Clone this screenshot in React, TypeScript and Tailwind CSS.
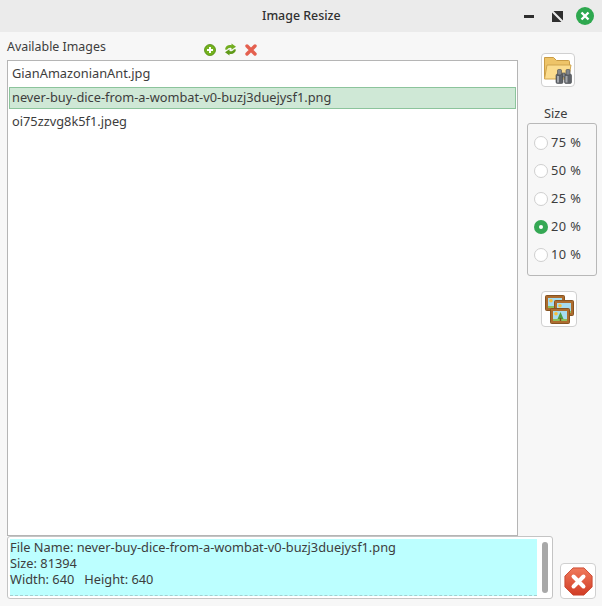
import React from "react";

const Btn = ({ children, className = "" }: { children: React.ReactNode; className?: string }) => (
  <div className={"flex shrink-0 items-center justify-center rounded-[4px] border border-[#d0d0d0] bg-white " + className}>{children}</div>
);

const FolderIcon = () => (
  <svg width="28" height="28" viewBox="0 0 28 28">
    <path d="M0.500 1.500h9l3 3h12a1 1 0 0 1 1 1v17H1.500a1 1 0 0 1-1-1z" fill="#eec468" stroke="#c99c45" />
    <path d="M3 9h24l-2.500 14H0.500z" fill="#fbdc8e" stroke="#d0a54e" />
    <g fill="#5f6369" stroke="#44474c" strokeWidth="0.6">
      <rect x="12" y="18" width="7" height="9.500" rx="1.500" />
      <rect x="20.500" y="18" width="7" height="9.500" rx="1.500" />
      <rect x="13.500" y="13.500" width="4" height="5.500" rx="1" fill="#83878c" />
      <rect x="22" y="13.500" width="4" height="5.500" rx="1" fill="#83878c" />
      <rect x="18.500" y="17" width="2.500" height="4" fill="#83878c" />
    </g>
    <rect x="13" y="20" width="2" height="6.500" fill="#a5a8ac" />
    <rect x="21.500" y="20" width="2" height="6.500" fill="#a5a8ac" />
  </svg>
);

const Frame = ({ x, y, tree }: { x: number; y: number; tree?: boolean }) => (
  <g transform={`translate(${x} ${y})`}>
    <rect x="0.500" y="0.500" width="19" height="15" rx="1" fill="#ad6c2e" stroke="#855322" />
    <rect x="3" y="3" width="14" height="10" fill="#a6dcf0" />
    <circle cx="6" cy="5.800" r="1.800" fill="#f6c13d" />
    <rect x="3" y="11" width="14" height="2" fill="#8cbf5a" />
    {tree && (
      <>
        <path d="M10.500 4l3 7h-6z" fill="#4f9a3f" />
        <rect x="9.800" y="10" width="1.400" height="3" fill="#7a4a1c" />
      </>
    )}
  </g>
);

const ImagesIcon = () => (
  <svg width="29" height="29" viewBox="0 0 29 29">
    <Frame x={0} y={0} />
    <Frame x={9} y={5} />
    <Frame x={5} y={13} tree />
  </svg>
);

const StopIcon = () => (
  <svg width="29" height="29" viewBox="0 0 32 32">
    <defs>
      <linearGradient id="st" x1="0" y1="0" x2="0" y2="1">
        <stop offset="0" stopColor="#f07a5c" />
        <stop offset="1" stopColor="#d13c25" />
      </linearGradient>
    </defs>
    <path d="M10 1h12l9 9v12l-9 9H10l-9-9V10z" fill="url(#st)" stroke="#c8452e" />
    <path d="M10.500 10.500l11 11M21.500 10.500l-11 11" stroke="#fff" strokeWidth="4.400" strokeLinecap="round" />
  </svg>
);

const SmallAdd = () => (
  <svg width="12" height="12" viewBox="0 0 12 12">
    <circle cx="6" cy="6" r="5.500" fill="#74b21e" stroke="#4f8a10" strokeWidth="0.800" />
    <path d="M6 3v6M3 6h6" stroke="#fff" strokeWidth="2" />
  </svg>
);

const SmallRefresh = () => (
  <svg width="13" height="13" viewBox="0 0 13 13">
    <path d="M1 6.500C1.500 3 4.500 1.500 7.500 2.300V0.500L12 3.800 7.500 6.800V4.900C5.500 4.400 4 5 3 6.800z" fill="#72ad20" />
    <path d="M12 6.500C11.500 10 8.500 11.500 5.500 10.700V12.500L1 9.200 5.500 6.200V8.100C7.500 8.600 9 8 10 6.200z" fill="#5f9a18" />
  </svg>
);

const SmallDelete = () => (
  <svg width="12" height="12" viewBox="0 0 12 12">
    <path d="M2 2l8 8M10 2l-8 8" stroke="#e4604f" strokeWidth="3.400" strokeLinecap="round" />
  </svg>
);

const Radio = ({ label, checked }: { label: string; checked?: boolean }) => (
  <div className="flex h-[28px] items-center gap-[3px]">
    {checked ? (
      <div className="flex h-[14px] w-[14px] items-center justify-center rounded-full bg-[#35a854]">
        <div className="h-[4px] w-[4px] rounded-full bg-white" />
      </div>
    ) : (
      <div className="h-[14px] w-[14px] rounded-full border border-[#cfcfcf] bg-white" />
    )}
    <span className="tracking-[0.4px]">{label}</span>
  </div>
);

export default function App() {
  return (
    <div
      className="flex h-[606px] w-[602px] flex-col overflow-hidden bg-[#f7f7f7] text-[12.8px] text-[#3d3d3d]"
      style={{ fontFamily: '"Noto Sans", "Open Sans", sans-serif' }}
    >
      <div className="flex h-[32px] shrink-0 items-center bg-[#ebebeb] pl-[262px]">
        <span className="w-[262px] text-[12.400px] font-medium text-[#303030]">Image Resize</span>
        <div className="flex items-center">
          <div className="mt-[1px] h-[3px] w-[10px] bg-[#2e2e2e]" />
          <svg width="11" height="11" viewBox="0 0 11 11" className="ml-[18px]">
            <path d="M0 1.500V11h9.500zM11 9.500V0H1.500z" fill="#2e2e2e" />
          </svg>
          <svg width="18" height="18" viewBox="0 0 18 18" className="ml-[13px]">
            <circle cx="9" cy="9" r="9" fill="#2ea84f" />
            <path d="M5.500 5.500l7 7M12.500 5.500l-7 7" stroke="#fff" strokeWidth="2.400" />
          </svg>
        </div>
      </div>
      <div className="flex min-h-0 flex-1">
        <div className="ml-[7px] flex w-[511px] flex-col">
          <div className="flex h-[28px] shrink-0 items-end pb-[4px]">
            <span className="w-[197px] text-[12.400px] leading-[18px]">Available Images</span>
            <div className="flex items-center gap-[8px]">
              <SmallAdd />
              <SmallRefresh />
              <SmallDelete />
            </div>
          </div>
          <div className="min-h-0 flex-1 border border-[#b5b5b5] bg-white px-[1px] pt-[1px]">
            <div className="flex h-[24px] items-center pl-[3px]">GianAmazonianAnt.jpg</div>
            <div className="my-[1px] flex h-[22px] items-center border border-[#8cc49c] bg-[#cfe8d6] pl-[2px]">
              never-buy-dice-from-a-wombat-v0-buzj3duejysf1.png
            </div>
            <div className="flex h-[24px] items-center pl-[3px]">oi75zzvg8k5f1.jpeg</div>
          </div>
        </div>
        <div className="flex flex-col items-start pl-[23px]">
          <Btn className="mt-[21px] h-[34px] w-[34px]">
            <FolderIcon />
          </Btn>
          <div className="mt-[17px] mb-[1px] ml-[3px] leading-[18px]">Size</div>
          <div className="-ml-[14px] flex h-[153px] w-[70px] flex-col rounded-[3px] border border-[#b8b8b8] pt-[5px] pl-[6px]">
            <Radio label="75 %" />
            <Radio label="50 %" />
            <Radio label="25 %" />
            <Radio label="20 %" checked />
            <Radio label="10 %" />
          </div>
          <Btn className="mt-[15px] h-[36px] w-[36px]">
            <ImagesIcon />
          </Btn>
        </div>
      </div>
      <div className="mb-[7px] flex h-[63px] shrink-0 items-end pl-[7px]">
        <div className="flex h-[63px] w-[546px] rounded-[3px] border border-[#c4c4c4] bg-white">
          <div className="my-[2px] ml-[2px] w-[527px] border-b border-dashed border-[#a4cfd0] bg-[#bcffff] leading-[16px]">
            <div>File Name: never-buy-dice-from-a-wombat-v0-buzj3duejysf1.png</div>
            <div>Size: 81394</div>
            <div>Width: 640 &nbsp; Height: 640</div>
          </div>
          <div className="flex flex-1 items-center justify-center">
            <div className="h-[51px] w-[6px] rounded-[3px] bg-[#a8a8a8]" />
          </div>
        </div>
        <Btn className="ml-[7px] h-[36px] w-[36px]">
          <StopIcon />
        </Btn>
      </div>
    </div>
  );
}
